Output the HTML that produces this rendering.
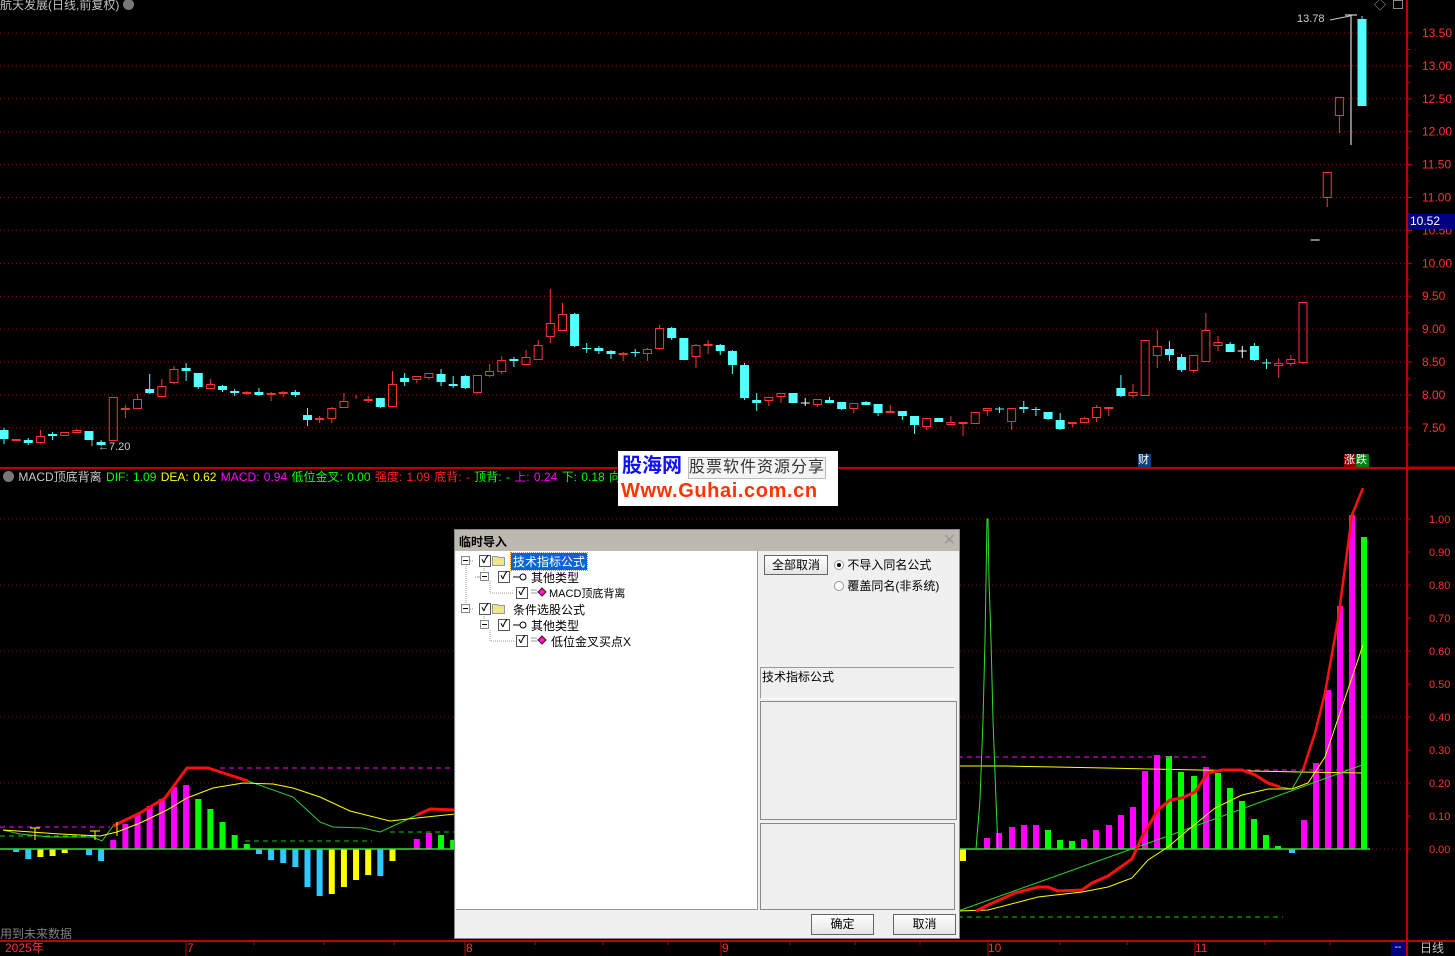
<!DOCTYPE html>
<html><head><meta charset="utf-8">
<style>
*{margin:0;padding:0;box-sizing:border-box}
body{width:1455px;height:956px;background:#000;overflow:hidden;position:relative;font-family:"Liberation Sans","Noto Sans CJK SC",sans-serif;font-size:12px}
.abs{position:absolute;white-space:nowrap}
svg{position:absolute;left:0;top:0}
.dlg{position:absolute;left:454px;top:529px;width:506px;height:410px;background:#f0f0f0;border:1px solid #888;font-family:"Liberation Sans","Noto Sans CJK SC",sans-serif;font-size:12px;color:#000}
.tb{position:absolute;left:0;top:0;width:504px;height:21px;background:#bdb9b1;font-weight:bold;padding:3px 4px}
.tree{position:absolute;left:1px;top:21px;width:302px;height:359px;background:#fff;border-right:1px solid #999;border-bottom:1px solid #999}
.cb{position:absolute;width:12px;height:12px;border:1px solid #555;background:#fff;font-size:10px;line-height:10px;text-align:center;font-weight:bold}
.btn{position:absolute;border:1px solid #666;background:linear-gradient(#fff,#e4e4e4);text-align:center;line-height:18px}
</style></head><body>
<svg id="s" width="1455" height="956"></svg>

<div class="abs" style="left:0;top:-4px;color:#c0c0c0;font-size:12px">航天发展(日线,前复权) <span style="display:inline-block;width:11px;height:11px;border-radius:50%;background:#777;vertical-align:-1px"></span></div>
<div class="abs" style="left:1374px;top:-4px;color:#aaa;font-size:12px">◇</div>
<div class="abs" style="left:1393px;top:0;width:10px;height:9px;border:1px solid #888"></div>
<div class="abs" style="left:1297px;top:13px;color:#ccc;font-size:11px">13.78</div>
<div class="abs" style="left:98px;top:441px;color:#ccc;font-size:11px">←7.20</div>

<div class="abs" style="left:1408px;top:214px;width:47px;height:15px;background:#000080;color:#fff;font-size:12px;padding-left:2px;line-height:15px">10.52</div>

<div class="abs" style="left:1138px;top:454px;width:13px;height:13px;background:#0d4080;color:#fff;font-size:11px;line-height:13px">财</div>
<div class="abs" style="left:1344px;top:454px;width:12px;height:13px;background:#8b0000;color:#fff;font-size:11px;line-height:13px">涨</div>
<div class="abs" style="left:1356px;top:454px;width:13px;height:13px;background:#00800a;color:#fff;font-size:11px;line-height:13px">跌</div>

<div class="abs" style="left:3px;top:470px;font-size:12px;line-height:14px;word-spacing:1px">
<span style="display:inline-block;width:11px;height:11px;border-radius:50%;background:#777;vertical-align:-1px"></span>
<span style="color:#c8c8c8">MACD顶底背离</span>
<span style="color:#00ff00">DIF: 1.09</span>
<span style="color:#ffff00">DEA: 0.62</span>
<span style="color:#ff00ff">MACD: 0.94</span>
<span style="color:#00ff00">低位金叉: 0.00</span>
<span style="color:#ff2020">强度: 1.09</span>
<span style="color:#ff2020">底背: -</span>
<span style="color:#00ff00">顶背: -</span>
<span style="color:#ff00ff">上: 0.24</span>
<span style="color:#00ff00">下: 0.18</span>
<span style="color:#00ff00">向上</span>
</div>

<div class="abs" style="left:618px;top:451px;width:220px;height:55px;background:#fff">
<div class="abs" style="left:4px;top:3px;color:#1010ff;font-size:20px;font-weight:bold;line-height:24px">股海网</div>
<div class="abs" style="left:70px;top:6px;color:#333;font-size:16px;line-height:20px;border:1px solid #bbb;background:#f4f4f4;letter-spacing:1px">股票软件资源分享</div>
<div class="abs" style="left:3px;top:28px;color:#ff3300;font-size:20px;font-weight:bold;line-height:24px;letter-spacing:0.6px">Www.Guhai.com.cn</div>
</div>

<div class="dlg">
<div class="tb">临时导入<span style="position:absolute;right:3px;top:0;color:#999;font-weight:normal;font-size:16px">✕</span></div>
<div class="tree">
 <svg width="300" height="120" style="position:absolute;left:0;top:0">
  <g stroke="#999" stroke-dasharray="1,1" fill="none">
   <path d="M10 10H18 M10 15V58 M28 15V26 M28 26H18 M34 30V42H58 M10 58H18 M28 63V74 M34 79V90H58 M28 26 M22 26H26"/>
  </g>
  <g stroke="#888" fill="#fff"><rect x="5.5" y="5.5" width="8" height="8"/><rect x="24.5" y="21.5" width="8" height="8"/><rect x="5.5" y="53.5" width="8" height="8"/><rect x="24.5" y="69.5" width="8" height="8"/></g>
  <g stroke="#000"><path d="M7 9.5H12 M26 25.5H31 M7 57.5H12 M26 73.5H31"/></g>
  <g fill="#f0e68c" stroke="#999"><path d="M36.5 5.5h5l1 1h6v8h-12z"/><path d="M36.5 53.5h5l1 1h6v8h-12z"/></g>
  <g stroke="#000" fill="none"><path d="M57 26H64 M57 74H64"/><circle cx="67" cy="26" r="3"/><circle cx="67" cy="74" r="3"/></g>
  <g fill="#e020e0" stroke="#600"><path d="M86 37l4 4-4 4-4-4z"/><path d="M86 85l4 4-4 4-4-4z"/></g>
  <g stroke="#999"><path d="M75 39H81 M75 42H81 M75 87H81 M75 90H81"/></g>
 </svg>
 <div class="cb" style="left:23px;top:4px">✓</div>
 <div class="abs" style="left:55px;top:2px;background:#0a64d8;color:#fff;padding:0 2px;outline:1px dotted #f80">技术指标公式</div>
 <div class="cb" style="left:42px;top:20px">✓</div>
 <div class="abs" style="left:75px;top:18px">其他类型</div>
 <div class="cb" style="left:60px;top:36px">✓</div>
 <div class="abs" style="left:93px;top:34px;font-size:11px">MACD顶底背离</div>
 <div class="cb" style="left:23px;top:52px">✓</div>
 <div class="abs" style="left:57px;top:50px">条件选股公式</div>
 <div class="cb" style="left:42px;top:68px">✓</div>
 <div class="abs" style="left:75px;top:66px">其他类型</div>
 <div class="cb" style="left:60px;top:84px">✓</div>
 <div class="abs" style="left:95px;top:82px">低位金叉买点X</div>
</div>
<div class="btn" style="left:309px;top:25px;width:64px;height:20px">全部取消</div>
<div class="abs" style="left:379px;top:26px"><span style="display:inline-block;width:10px;height:10px;border:1px solid #999;border-radius:50%;background:#fff;position:relative;vertical-align:-1px"><span style="position:absolute;left:2px;top:2px;width:4px;height:4px;border-radius:50%;background:#000"></span></span> 不导入同名公式</div>
<div class="abs" style="left:379px;top:47px"><span style="display:inline-block;width:10px;height:10px;border:1px solid #999;border-radius:50%;background:#fff;vertical-align:-1px"></span> 覆盖同名(非系统)</div>
<div class="abs" style="left:305px;top:137px;width:194px;height:32px;border-top:1px solid #999;border-left:1px solid #999;border-bottom:1px solid #fff;padding:0 1px">技术指标公式</div>
<div class="abs" style="left:305px;top:171px;width:197px;height:119px;border:1px solid #888;background:#efefef"></div>
<div class="abs" style="left:305px;top:293px;width:195px;height:87px;border:1px solid #888;background:#efefef"></div>
<div class="btn" style="left:356px;top:384px;width:63px;height:21px">确定</div>
<div class="btn" style="left:438px;top:384px;width:63px;height:21px">取消</div>
</div>

<div class="abs" style="left:0;top:925px;color:#808080;font-size:12px">用到未来数据</div>
<div class="abs" style="left:5px;top:941px;color:#ff3030;font-size:12px;line-height:15px">2025年</div>
<div class="abs" style="left:187px;top:941px;color:#ff3030;font-size:12px;line-height:15px">7</div>
<div class="abs" style="left:466px;top:941px;color:#ff3030;font-size:12px;line-height:15px">8</div>
<div class="abs" style="left:722px;top:941px;color:#ff3030;font-size:12px;line-height:15px">9</div>
<div class="abs" style="left:988px;top:941px;color:#ff3030;font-size:12px;line-height:15px">10</div>
<div class="abs" style="left:1195px;top:941px;color:#ff3030;font-size:12px;line-height:15px">11</div>
<div class="abs" style="left:1391px;top:942px;width:14px;height:14px;background:#000080;color:#fff;font-size:10px;line-height:12px;text-align:center">--</div>
<div class="abs" style="left:1420px;top:941px;color:#c0c0c0;font-size:12px;line-height:15px">日线</div>

<script>
var S=document.getElementById('s'),h='';
function L(x1,y1,x2,y2,c,w,d){h+='<line x1="'+x1+'" y1="'+y1+'" x2="'+x2+'" y2="'+y2+'" stroke="'+c+'" stroke-width="'+(w||1)+'"'+(d?' stroke-dasharray="'+d+'"':'')+'/>';}
function R(x,y,w,hh,f,s){h+='<rect x="'+x+'" y="'+y+'" width="'+w+'" height="'+hh+'" fill="'+f+'"'+(s?' stroke="'+s+'"':'')+'/>';}
function P(pts,c,w,d){h+='<polyline fill="none" points="'+pts+'" stroke="'+c+'" stroke-width="'+(w||1)+'"'+(d?' stroke-dasharray="'+d+'"':'')+'/>';}
var labs=['13.50','13.00','12.50','12.00','11.50','11.00','10.50','10.00','9.50','9.00','8.50','8.00','7.50'];
for(var k=0;k<13;k++){var y=33+k*32.9;L(0,y,1407,y,'#c00000',1,'1,3');h+='<text x="1422" y="'+(y+4)+'" fill="#ff3030" font-size="12" font-family="Liberation Sans">'+labs[k]+'</text>';L(1407,y,1412,y,'#c00000');L(1407,y+16.5,1410,y+16.5,'#c00000');}
var ml=['1.00','0.90','0.80','0.70','0.60','0.50','0.40','0.30','0.20','0.10','0.00'];
for(k=0;k<11;k++){y=519+k*33;if(k%2==0)L(0,y,1407,y,'#800000',1,'1,3');L(1407,y,1411,y,'#c00000');h+='<text x="1429" y="'+(y+4)+'" fill="#ff3030" font-size="11" font-family="Liberation Sans">'+ml[k]+'</text>';}
L(1407,0,1407,956,'#c00000',2);L(0,468,1455,468,'#c00000',2);L(0,941,1455,941,'#c00000',2);L(1407,468,1455,468,'#c00000',3);
[186,465,721,988,1195].forEach(function(x){L(x,941,x,956,'#c00000');});
[254,324,394,535,603,668,790,855,920,1060,1127,1265,1330].forEach(function(x){L(x,941,x,945,'#c00000');});
var C=[[0,'c',430,439,428,444],[1,'r',439,441],[2,'c',440,443,438,445],[3,'r',436,443,430,444],[4,'c',434,436,432,440],[5,'r',432,436],[6,'r',430,433,429,433],[7,'c',431,440],[8,'c',442,445,440,446],[9,'r',397,441],[10,'r',408,410,405,418],[11,'r',399,409,394,409],[12,'c',389,393,374,394],[13,'r',386,397,379,397],[14,'r',369,383,366,384],[15,'c',368,371,363,381],[16,'c',373,387,373,389],[17,'r',384,389,379,389],[18,'c',386,390,385,392],[19,'c',391,393,389,396],[20,'r',392,394,391,395],[21,'c',392,395,388,396],[22,'r',393,395,392,401],[23,'r',392,394,391,397],[24,'c',392,395,390,397],[25,'c',415,420,408,426],[26,'r',418,420,416,423],[27,'r',408,419,407,423],[28,'r',401,408,393,408],[29,'r',399,400,395,400],[30,'r',399,401,396,403],[31,'c',398,407,398,408],[32,'r',384,407,371,407],[33,'c',378,382,373,386],[34,'r',376,380,376,383],[35,'r',373,378,373,380],[36,'c',374,382,369,386],[37,'c',384,386,376,388],[38,'c',376,388,375,389],[39,'r',375,393,375,394],[40,'r',371,376,364,377],[41,'r',360,372,356,374],[42,'c',359,361,357,367],[43,'r',357,365,350,365],[44,'r',345,360,340,360],[45,'r',323,337,289,343],[46,'r',314,331,303,331],[47,'c',314,346,313,347],[48,'c',348,349,343,353],[49,'c',348,351,346,354],[50,'c',351,354,350,359],[51,'r',353,355,352,361],[52,'c',352,353,349,357],[53,'r',349,354,348,361],[54,'r',328,349,325,350],[55,'c',328,338,327,340],[56,'c',338,360],[57,'r',345,357,344,368],[58,'r',344,346,340,354],[59,'c',345,351,344,355],[60,'c',351,365,350,374],[61,'c',365,398,363,400],
[62,'c',400,403,393,411],[63,'r',397,401,397,406],[64,'r',393,397,393,403],[65,'c',393,403],[66,'w',403,403,398,406],[67,'r',399,405,399,407],[68,'c',400,403,397,403],[69,'c',402,409,402,410],[70,'r',403,409,403,413],[71,'c',402,405,401,405],[72,'c',404,413,404,416],[73,'r',411,413,405,413],[74,'c',411,416,411,420],[75,'c',416,425,416,434],[76,'r',418,427,418,430],[77,'c',418,422],[78,'r',422,425,416,425],[79,'r',422,424,422,436],[80,'r',412,424],[81,'r',408,411,408,416],[82,'c',409,409,407,413],[83,'r',408,422,408,430],[84,'c',407,409,401,413],[85,'c',409,410,407,416],[86,'c',412,419,412,420],[87,'c',420,429,413,430],[88,'r',422,424,422,427],[89,'r',418,423,417,423],[90,'r',407,418,405,422],[91,'r',407,409,407,416],[92,'c',388,396,375,397],[93,'r',392,396,384,398],[94,'r',340,396],[95,'r',346,356,330,368],[96,'c',349,355,341,361],[97,'c',357,370,354,372],[98,'r',355,371,355,373],[99,'r',330,362,313,362],[100,'r',342,346,336,351],[101,'c',344,352,342,352],[102,'w',351,351,346,358],[103,'c',346,360,343,361],[104,'c',363,363,359,369],[105,'r',363,366,358,378],[106,'r',359,364,355,366],[107,'r',302,363,302,364],[108,'w',240,240,240,240],[109,'r',172,198,172,207],[110,'r',97,116,97,133]];
C.forEach(function(c){var x=4+12.14*c[0],t=c[2],b=c[3],hi=c[4]||t,lo=c[5]||b;
 var col=c[1]=='r'?'#ff3232':c[1]=='c'?'#54ffff':'#ffffff';
 L(x,hi,x,t,col);L(x,b,x,lo,col);
 if(c[1]=='w'||b-t<1){L(x-4.5,t,x+4.5,t,col);}
 else if(c[1]=='r'){R(x-4,t+.5,8,b-t-1,'none',col);}
 else R(x-4.5,t,9,b-t,col);
});
L(1351,15,1351,145,'#fff');L(1345,15,1357,15,'#fff');L(1330,20,1350,16,'#ccc');
L(1362,16,1362,20,'#54ffff');R(1357.5,19,9,87,'#54ffff');
L(92,446,92,440,'#aaa');
function bx(i){return 4+12.14*i;}
var B=[[1,852,'#30c8ff'],[2,859,'#30c8ff'],[3,857,'#ffff00'],[4,856,'#ffff00'],[5,853,'#ffff00'],[7,855,'#30c8ff'],[8,861,'#30c8ff'],[9,840,'#ff00ff'],[10,824,'#ff00ff'],[11,814,'#ff00ff'],[12,806,'#ff00ff'],[13,799,'#ff00ff'],[14,787,'#ff00ff'],[15,785,'#ff00ff'],[16,799,'#00ff00'],[17,809,'#00ff00'],[18,822,'#00ff00'],[19,835,'#00ff00'],[20,844,'#00ff00'],[21,854,'#30c8ff'],[22,860,'#30c8ff'],[23,863,'#30c8ff'],[24,867,'#30c8ff'],[25,887,'#30c8ff'],[26,896,'#30c8ff'],[27,894,'#ffff00'],[28,887,'#ffff00'],[29,880,'#ffff00'],[30,875,'#ffff00'],[31,876,'#30c8ff'],[32,861,'#ffff00'],[34,839,'#ff00ff'],[35,833,'#ff00ff'],[36,835,'#00ff00'],[37,840,'#00ff00']];
var RB=[[963,861,'#ffff00'],[987,838,'#ff00ff'],[999,833,'#ff00ff'],[1012,827,'#ff00ff'],[1024,825,'#ff00ff'],[1036,825,'#ff00ff'],[1048,830,'#00ff00'],[1060,840,'#00ff00'],[1072,841,'#00ff00'],[1084,839,'#ff00ff'],[1096,830,'#ff00ff'],[1109,825,'#ff00ff'],[1121,815,'#ff00ff'],[1133,807,'#ff00ff'],[1145,771,'#ff00ff'],[1157,755,'#ff00ff'],[1169,756,'#00ff00'],[1181,772,'#00ff00'],[1194,776,'#00ff00'],[1206,767,'#ff00ff'],[1218,773,'#00ff00'],[1230,788,'#00ff00'],[1242,801,'#00ff00'],[1254,819,'#00ff00'],[1266,835,'#00ff00'],[1278,846,'#00ff00'],[1292,853,'#30c8ff'],[1304,820,'#ff00ff'],[1316,763,'#ff00ff'],[1328,690,'#ff00ff'],[1340,606,'#ff00ff'],[1352,515,'#ff00ff'],[1364,537,'#00ff00']];
B.forEach(function(b){RB.push([bx(b[0]),b[1],b[2]]);});
RB.forEach(function(b){var x=b[0]-3;if(b[1]<849)R(x,b[1],6,849-b[1],b[2]);else R(x,849,6,b[1]-849,b[2]);});
L(0,849,1370,849,'#33dd33',1.5);
L(0,827,110,827,'#ff00ff',1,'5,4');L(220,768,455,768,'#ff00ff',1,'5,4');
L(0,836,100,836,'#00cc00',1,'5,4');L(245,841,372,841,'#00cc00',1,'5,4');L(390,832,455,832,'#00cc00',1,'5,4');
P('3,830 20,834 50,837 93,837 102,841 113,826','#30d030');
P('113,826 140,813 165,798 187,768 208,768 248,781','#ff1010',3);
P('248,781 293,797 320,822 333,827 363,828 380,832 417,815','#30d030');
P('417,815 430,809 455,810','#ff1010',3);
P('3,830 60,834 100,836 117,832 140,823 167,810 187,798 213,788 243,783 273,784 293,788 320,797 350,811 390,821 417,818 455,814','#ffff00');
L(30,828,40,828,'#ff0');L(35,828,35,840,'#ff0');L(90,831,100,831,'#ff0');L(95,831,95,840,'#ff0');L(117,822,117,836,'#ff0');
L(958,757,1210,757,'#ff00ff',1,'5,4');L(1210,770,1350,770,'#ff00ff',1,'5,4');L(958,917,1283,917,'#00cc00',1,'5,4');
P('958,766 1005,766 1055,767 1105,768 1150,769 1200,770 1250,771 1300,772 1362,773','#ffff00');
P('976,849 980,800 983,720 985,640 986,580 987,519 988,519 989,580 991,640 993,720 996,800 998,849','#30e030');
P('958,911 1168,836 1362,765','#30d030');
P('1280,787 1292,789 1303,770','#30d030');
P('958,911 988,910 1038,897 1082,892 1108,887 1132,878 1148,860 1168,847 1188,830 1215,808 1242,795 1268,789 1292,789 1308,783 1325,757 1342,707 1363,645','#ffff00');
P('976,911 988,905 1015,893 1038,887 1048,887 1058,891 1082,890 1092,883 1108,876 1132,859 1142,837 1158,810 1170,800 1182,798 1195,792 1208,773 1222,770 1242,770 1255,775 1268,783 1280,787','#ff1010',3);
P('1303,770 1315,733 1325,693 1338,620 1352,515 1363,488','#ff1010',2.5);
S.innerHTML=h;
</script>
</body></html>
